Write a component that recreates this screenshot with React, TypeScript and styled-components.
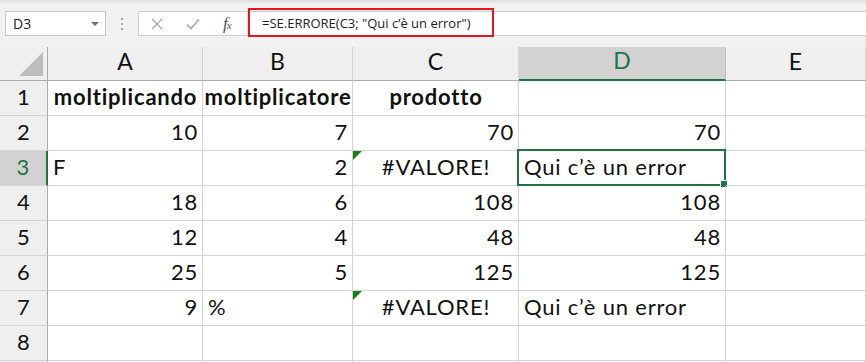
import styled, { createGlobalStyle } from "styled-components";

const GlobalStyle = createGlobalStyle`
  html, body {
    margin: 0;
    padding: 0;
    background: #ffffff;
    overflow: hidden;
  }
`;

const GREEN = "#217346";

const Page = styled.div`
  width: 866px;
  height: 362px;
  overflow: hidden;
  background: #fff;
  font-family: Lato, "Open Sans", sans-serif;
`;

const Toolbar = styled.div`
  height: 47px;
  box-sizing: border-box;
  background: linear-gradient(#dcdcdc 0, #f1f1f1 4px, #f1f1f1 100%);
  display: flex;
  align-items: flex-start;
  padding-top: 11px;
  padding-left: 5px;
  font-family: "Open Sans", "Noto Sans", sans-serif;
`;

const NameBox = styled.div`
  width: 101px;
  height: 25px;
  box-sizing: border-box;
  background: #fff;
  border: 1px solid #c8c8c8;
  display: flex;
  align-items: center;
  justify-content: space-between;
  padding: 0 6px 0 7px;
  font-size: 14px;
  color: #222;
`;

const Caret = styled.span`
  width: 0;
  height: 0;
  border-left: 4px solid transparent;
  border-right: 4px solid transparent;
  border-top: 4px solid #6e6e6e;
`;

const Dots = styled.div`
  width: 32px;
  height: 25px;
  display: flex;
  flex-direction: column;
  align-items: center;
  justify-content: center;
  gap: 3px;
  span {
    width: 2px;
    height: 2px;
    background: #a8a8a8;
  }
`;

const FormulaBar = styled.div`
  flex: 1;
  height: 25px;
  box-sizing: border-box;
  background: #fff;
  border-top: 1px solid #cfcfcf;
  border-bottom: 1px solid #cfcfcf;
  border-left: 1px solid #cfcfcf;
  display: flex;
  align-items: center;
`;

const Buttons = styled.div`
  width: 109px;
  height: 100%;
  display: flex;
  align-items: center;
  border-right: 1px solid #dcdcdc;
  padding-left: 12px;
  box-sizing: border-box;
`;

const IconSlot = styled.div<{ $w: number }>`
  width: ${(p) => p.$w}px;
  display: flex;
  align-items: center;
`;

const Fx = styled.span`
  font-family: "Liberation Serif", serif;
  font-style: italic;
  font-size: 17px;
  color: #4f4f4f;
  letter-spacing: -1px;
  sub {
    font-size: 11px;
    vertical-align: 0;
  }
`;

const FormulaText = styled.div`
  height: 29px;
  margin-top: -2px;
  width: 246px;
  box-sizing: border-box;
  border: 2px solid #e3151d;
  display: flex;
  align-items: center;
  padding-left: 12px;
  font-size: 13px;
  color: #222;
  white-space: nowrap;
`;

const Grid = styled.div`
  display: grid;
  grid-template-columns: 48px 155px 150px 166px 207px 1fr;
  grid-auto-rows: 35px;
  grid-template-rows: 34px;
`;

const ColHead = styled.div<{ $sel?: boolean }>`
  box-sizing: border-box;
  background: ${(p) => (p.$sel ? "#d2d2d2" : "#efefef")};
  border-right: 1px solid ${(p) => (p.$sel ? "#c0c0c0" : "#d4d4d4")};
  border-bottom: ${(p) => (p.$sel ? `2px solid ${GREEN}` : "1px solid #ababab")};
  color: ${(p) => (p.$sel ? GREEN : "#111")};
  font-size: 23px;
  display: flex;
  align-items: flex-end;
  justify-content: center;
  padding-bottom: 5px;
`;

const Corner = styled.div`
  box-sizing: border-box;
  background: #efefef;
  border-right: 1px solid #ababab;
  border-bottom: 1px solid #ababab;
  display: flex;
  align-items: flex-end;
  justify-content: flex-end;
  padding: 0 4px 4px 0;
`;

const CornerTri = styled.span`
  width: 0;
  height: 0;
  border-left: 24px solid transparent;
  border-bottom: 24px solid #bdbdbd;
`;

const RowHead = styled.div<{ $sel?: boolean }>`
  box-sizing: border-box;
  background: ${(p) => (p.$sel ? "#d2d2d2" : "#efefef")};
  border-right: ${(p) => (p.$sel ? `2px solid ${GREEN}` : "1px solid #ababab")};
  border-bottom: 1px solid #d4d4d4;
  color: ${(p) => (p.$sel ? GREEN : "#111")};
  font-size: 22px;
  display: flex;
  align-items: flex-end;
  justify-content: center;
  padding-bottom: 5px;
`;

type Align = "left" | "right" | "center";

const Cell = styled.div<{ $align?: Align; $bold?: boolean }>`
  position: relative;
  box-sizing: border-box;
  border-right: 1px solid #d4d4d4;
  border-bottom: 1px solid #d4d4d4;
  font-size: 22px;
  font-weight: ${(p) => (p.$bold ? 700 : 400)};
  letter-spacing: 0.8px;
  color: #111;
  display: flex;
  align-items: flex-end;
  justify-content: ${(p) =>
    p.$align === "right" ? "flex-end" : p.$align === "center" ? "center" : "flex-start"};
  padding: 0 4px 5px 5px;
  white-space: nowrap;
  overflow: visible;
`;

const ErrorTri = styled.span`
  position: absolute;
  left: 0;
  top: 0;
  width: 0;
  height: 0;
  border-top: 9px solid #1e7e1e;
  border-right: 9px solid transparent;
`;

const Selection = styled.div`
  position: absolute;
  left: -2px;
  top: -2px;
  right: -1px;
  bottom: -1px;
  border: 2px solid ${GREEN};
  pointer-events: none;
`;

const FillHandle = styled.span`
  position: absolute;
  right: -4px;
  bottom: -4px;
  width: 6px;
  height: 6px;
  background: ${GREEN};
  border: 1px solid #fff;
`;

type CellData = { v?: string; a?: Align; b?: boolean; err?: boolean; sel?: boolean };

const rows: CellData[][] = [
  [
    { v: "moltiplicando", b: true, a: "center" },
    { v: "moltiplicatore", b: true, a: "center" },
    { v: "prodotto", b: true, a: "center" },
    {},
    {},
  ],
  [{ v: "10", a: "right" }, { v: "7", a: "right" }, { v: "70", a: "right" }, { v: "70", a: "right" }, {}],
  [
    { v: "F" },
    { v: "2", a: "right" },
    { v: "#VALORE!", a: "center", err: true },
    { v: "Qui c’è un error", sel: true },
    {},
  ],
  [{ v: "18", a: "right" }, { v: "6", a: "right" }, { v: "108", a: "right" }, { v: "108", a: "right" }, {}],
  [{ v: "12", a: "right" }, { v: "4", a: "right" }, { v: "48", a: "right" }, { v: "48", a: "right" }, {}],
  [{ v: "25", a: "right" }, { v: "5", a: "right" }, { v: "125", a: "right" }, { v: "125", a: "right" }, {}],
  [
    { v: "9", a: "right" },
    { v: "%" },
    { v: "#VALORE!", a: "center", err: true },
    { v: "Qui c’è un error" },
    {},
  ],
  [{}, {}, {}, {}, {}],
  [{}, {}, {}, {}, {}],
];

const cols = ["A", "B", "C", "D", "E"];

export default function App() {
  return (
    <Page>
      <GlobalStyle />
      <Toolbar>
        <NameBox>
          D3
          <Caret />
        </NameBox>
        <Dots>
          <span />
          <span />
          <span />
        </Dots>
        <FormulaBar>
          <Buttons>
            <IconSlot $w={35}>
              <svg width="12" height="12" viewBox="0 0 12 12">
                <path d="M1 1 L11 11 M11 1 L1 11" stroke="#a9a9a9" strokeWidth="1.3" />
              </svg>
            </IconSlot>
            <IconSlot $w={37}>
              <svg width="14" height="12" viewBox="0 0 14 12">
                <path d="M1 6.5 L5 10.5 L13 1.5" stroke="#a9a9a9" strokeWidth="1.7" fill="none" />
              </svg>
            </IconSlot>
            <IconSlot $w={24}>
              <Fx>
                f<sub>x</sub>
              </Fx>
            </IconSlot>
          </Buttons>
          <FormulaText>=SE.ERRORE(C3; "Qui c’è un error")</FormulaText>
        </FormulaBar>
      </Toolbar>
      <Grid>
        <Corner>
          <CornerTri />
        </Corner>
        {cols.map((c) => (
          <ColHead key={c} $sel={c === "D"}>
            {c}
          </ColHead>
        ))}
        {rows.map((r, i) => [
          <RowHead key={`h${i}`} $sel={i === 2}>
            {i < 8 ? i + 1 : ""}
          </RowHead>,
          ...r.map((cell, j) => (
            <Cell key={`${i}-${j}`} $align={cell.a} $bold={cell.b}>
              {cell.err && <ErrorTri />}
              {cell.v}
              {cell.sel && (
                <Selection>
                  <FillHandle />
                </Selection>
              )}
            </Cell>
          )),
        ])}
      </Grid>
    </Page>
  );
}
